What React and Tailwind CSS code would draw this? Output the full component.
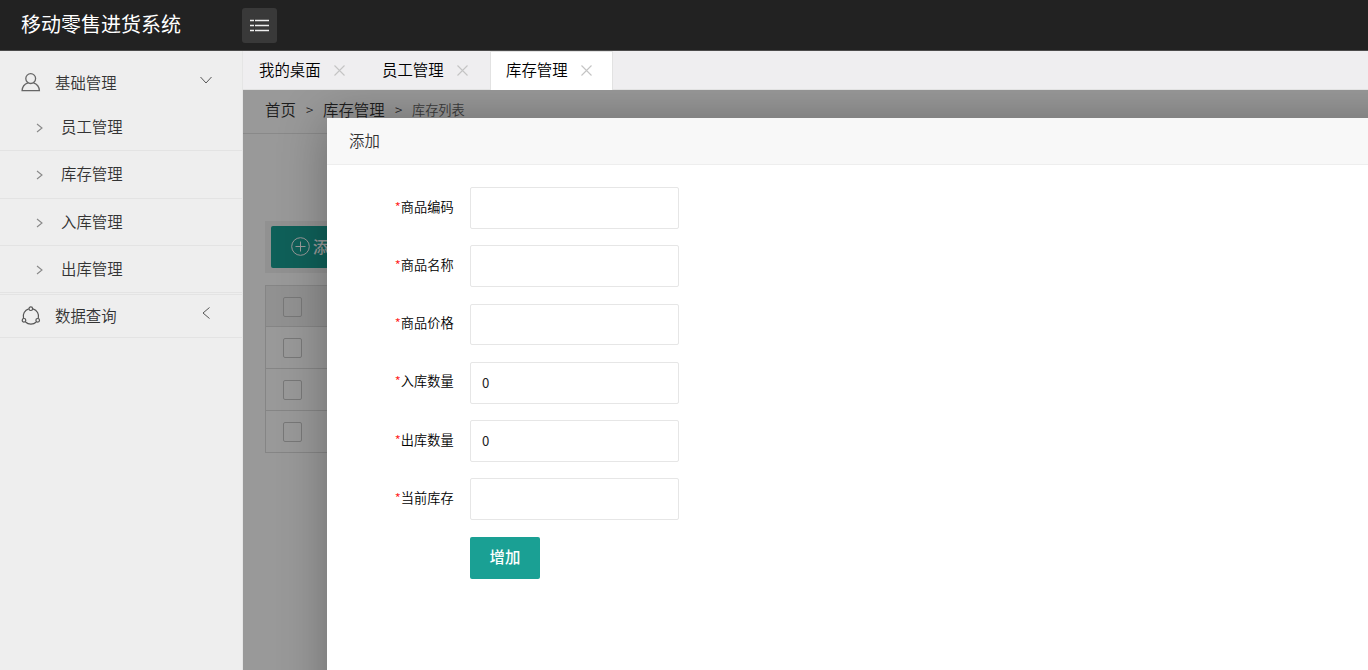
const menus = ['员工管理', '库存管理', '入库管理', '出库管理'];

const tabs = [
  { name: '我的桌面' },
  { name: '员工管理' },
  { name: '库存管理', active: true },
];

const fields = [
  { label: '商品编码', value: '' },
  { label: '商品名称', value: '' },
  { label: '商品价格', value: '' },
  { label: '入库数量', value: '0' },
  { label: '出库数量', value: '0' },
  { label: '当前库存', value: '' },
];

function Icon({ className, box, width = 1, children }) {
  return (
    <svg
      className={`shrink-0 ${className}`}
      viewBox={box}
      fill="none"
      stroke="currentColor"
      strokeWidth={width}
    >
      {children}
    </svg>
  );
}

function Header() {
  return (
    <header className="h-[51px] shrink-0 bg-[#222] border-b border-[#4b4b4b] flex items-start">
      <h1 className="w-[242px] pl-[21px] pt-[9px] text-[20px] leading-[30px] text-white">移动零售进货系统</h1>
      <button type="button" className="mt-2 w-[35px] h-[35px] rounded-[3px] bg-[#393939] text-[#eee] flex items-center justify-center">
        <Icon className="w-[19px] h-[13px]" box="0 0 19 13" width={1.3}>
          <path d="M0 1.500h4M5 1.500h14M0 6.500h4M5 6.500h14M0 11.500h4M5 11.500h14" />
        </Icon>
      </button>
    </header>
  );
}

function Sidebar() {
  return (
    <aside className="w-[243px] shrink-0 bg-[#eee] border-r border-[#e5e5e5] text-[15.4px] font-[350] text-[#333]">
      <div className="h-[53px] pl-[21px] pr-[30px] pt-[20px] flex items-start">
        <Icon className="w-5 h-5 mt-[1px] text-[#666]" box="0 0 20 20" width={1.3}>
          <circle cx="9.700" cy="6.600" r="4.900" />
          <path d="M7 10.800C3.300 12 1.300 14.600 1.100 18.600h17.300C18.200 14.600 16.200 12 12.400 10.800" />
        </Icon>
        <span className="ml-[14px] -mt-[1px] leading-6">基础管理</span>
        <Icon className="w-3 h-2 ml-auto mt-[5px] text-[#555]" box="0 0 12 8">
          <path d="M.5 1 6 7l5.500-6" />
        </Icon>
      </div>
      <ul>
        {menus.map((name, i) => (
          <li
            key={name}
            className={`${i === 1 ? 'h-[48px] pb-[1px]' : 'h-[47px]'} pl-[36px] border-b border-[#e3e3e3] flex items-center`}
          >
            <Icon className="w-[7px] h-[10px] mt-[2px] text-[#888]" box="0 0 7 10" width={1.1}>
              <path d="M1 1l5 4-5 4" />
            </Icon>
            <span className="ml-[18px]">{name}</span>
          </li>
        ))}
      </ul>
      <div className="mt-[1px] h-[44px] pl-[21px] pr-[32px] border-y border-[#e3e3e3] flex items-center">
        <Icon className="w-5 h-5 text-[#555]" box="0 0 20 20" width={1.2}>
          <path d="M7.700 2.900A7.700 7.700 0 0 0 2.500 12.300M12 2.900A7.700 7.700 0 0 1 17.300 12.300M4.500 16a7.700 7.700 0 0 0 10.800 0" />
          <circle cx="9.800" cy="2.700" r="1.800" />
          <circle cx="3" cy="14.300" r="1.800" />
          <circle cx="16.700" cy="14.300" r="1.800" />
        </Icon>
        <span className="ml-[14px]">数据查询</span>
        <Icon className="w-2 h-3 ml-auto mb-[6px] text-[#555]" box="0 0 8 12">
          <path d="M7.500.5 1 6l6.500 5.500" />
        </Icon>
      </div>
    </aside>
  );
}

function Tabs() {
  return (
    <nav className="h-[39px] bg-[#efeef0] border-b border-[#e2e2e2] flex text-[15.4px] font-[350] text-black">
      {tabs.map((tab) => (
        <div
          key={tab.name}
          className={`w-[123px] h-[39px] shrink-0 pl-[15px] pb-[4px] flex items-center border-x border-t ${
            tab.active ? 'ml-[1px] bg-white border-[#e2e2e2]' : 'border-transparent'
          }`}
        >
          <span className="w-[62px] -mt-[1px] leading-6 whitespace-nowrap">{tab.name}</span>
          <Icon className="w-[11px] h-[11px] ml-[13px] mt-[3px] text-[#c4c4c4]" box="0 0 11 11" width={1.1}>
            <path d="M.5.5l10 10M10.500.5l-10 10" />
          </Icon>
        </div>
      ))}
    </nav>
  );
}

function StockList() {
  return (
    <div className="w-[1125px]">
      <div className="h-11 pl-[22px] border-b border-[#e5e5e5] flex items-center text-[15.4px] font-[350] text-[#333] pb-[4px]">
        <span className="w-[31px] whitespace-nowrap">首页</span>
        <span className="w-[27px] text-center text-[13.2px]">&gt;</span>
        <span className="w-[62px] whitespace-nowrap">库存管理</span>
        <span className="w-[27px] text-center text-[13.2px]">&gt;</span>
        <span className="text-[13.2px] text-[#666]">库存列表</span>
      </div>
      <div className="ml-[22px] mt-[87px] h-[52px] bg-[#f2f2f2] pl-[6px] pt-[5px]">
        <button type="button" className="w-[92px] h-[42px] pl-5 rounded-[2px] bg-[#1aa094] text-white text-[15.4px] flex items-center whitespace-nowrap">
          <Icon className="w-[19px] h-[19px] mr-[3px] mb-[1px]" box="0 0 19 19">
            <circle cx="9.500" cy="9.500" r="8.800" />
            <path d="M9.500 4.500v10M4.500 9.500h10" />
          </Icon>
          <span className="font-medium">添加</span>
        </button>
      </div>
      <div className="ml-[22px] mt-3 border-t border-l border-[#dedede]">
        {['head', 1, 2, 3].map((row) => (
          <div
            key={row}
            className={`pl-[17px] border-b border-[#dedede] flex items-center ${
              row === 'head' ? 'h-[41px] pt-[2px] bg-[#f2f2f2]' : 'h-[42px]'
            }`}
          >
            <span className="w-[19px] h-[20px] rounded-[2px] border border-[#c8c8c8] bg-white/20" />
          </div>
        ))}
      </div>
    </div>
  );
}

function AddDialog() {
  return (
    <section className="absolute left-[84px] top-[28px] w-[1100px] h-[620px] rounded-[2px] bg-white shadow-[1px_1px_50px_rgba(0,0,0,0.3)]">
      <h2 className="h-[47px] pl-[22px] bg-[#f8f8f8] border-b border-[#eee] text-[15.4px] font-[350] leading-[45px] text-[#333]">添加</h2>
      <form className="pt-[22.1px]">
        {fields.map((field) => (
          <div key={field.label} className="h-[41.8px] mb-[16.45px] flex">
            <label className="w-[126.6px] mr-[16.4px] pt-[9.6px] text-right text-[13.2px] font-[350] leading-5 text-black whitespace-nowrap">
              <span className="text-[#ff2222]">*</span>
              {field.label}
            </label>
            <input
              className="w-[209px] h-full pl-[11px] pb-[1px] border border-[#e6e6e6] rounded-[2px] text-[13.2px] text-[#222]"
              defaultValue={field.value}
            />
          </div>
        ))}
        <button type="button" className="ml-[143px] w-[70px] h-[42px] pb-[2px] rounded-[2px] bg-[#1aa094] text-white text-[15.4px] font-medium">
          增加
        </button>
      </form>
    </section>
  );
}

export default function App() {
  return (
    <div className="w-[1368px] h-[670px] overflow-hidden flex flex-col bg-white font-['Noto_Sans_CJK_SC',sans-serif]">
      <Header />
      <div className="flex-1 min-h-0 flex">
        <Sidebar />
        <div className="flex-1 min-w-0 flex flex-col">
          <Tabs />
          <main className="relative flex-1 overflow-hidden">
            <StockList />
            <div className="absolute inset-0 bg-black/40" />
            <AddDialog />
          </main>
        </div>
      </div>
    </div>
  );
}
